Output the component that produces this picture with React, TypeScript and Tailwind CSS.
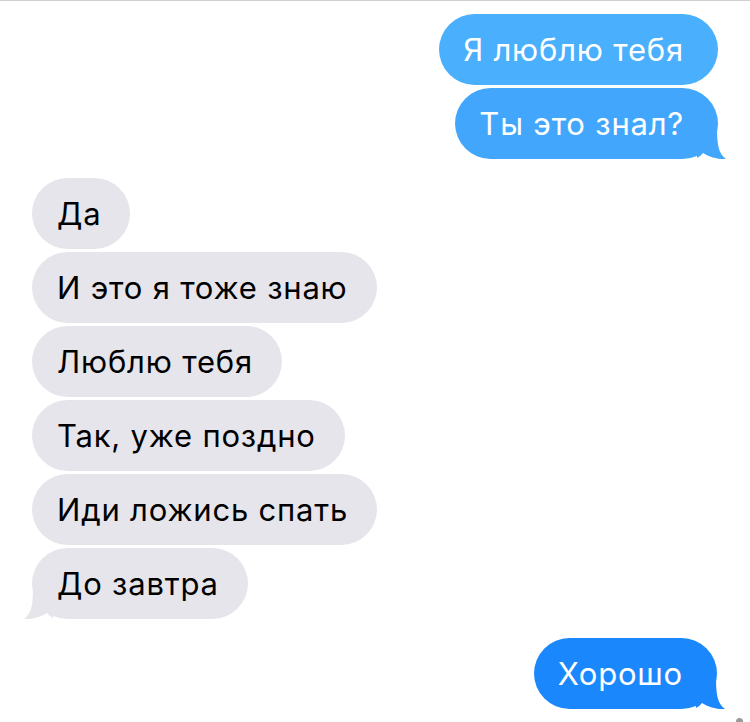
import React from 'react';

type Side = 'me' | 'them';

interface Msg {
  text: string;
  side: Side;
  color?: string;
  tail?: boolean;
}

function Tail({ side, fill }: { side: Side; fill: string }) {
  if (side === 'me') {
    return (
      <svg
        className="absolute bottom-[-1px] right-[-9px]"
        width="30"
        height="32"
        viewBox="0 0 30 32"
      >
        <path
          d="M0 0 L20 0 C20 18 22 26 29 31 C21 31.5 12 29 6 25 Q3 29 0 30 Z"
          fill={fill}
        />
      </svg>
    );
  }
  return (
    <svg
      className="absolute bottom-[-1px] left-[-9px]"
      width="30"
      height="32"
      viewBox="0 0 30 32"
    >
      <path
        d="M30 0 L10 0 C10 18 8 26 1 31 C9 31.5 18 29 24 25 Q27 29 30 30 Z"
        fill={fill}
      />
    </svg>
  );
}

function Bubble({ msg }: { msg: Msg }) {
  const isMe = msg.side === 'me';
  const bg = isMe ? msg.color ?? '#47acfc' : '#e6e5eb';
  return (
    <div className={isMe ? 'flex justify-end' : 'flex justify-start'}>
      <div
        className={
          'relative h-[71px] flex items-center rounded-[36px] text-[31px] leading-[36px] tracking-[0.8px] ' +
          (isMe ? 'pl-[24px] pr-[34px] text-white' : 'pl-[25px] pr-[29px] text-black')
        }
        style={{ backgroundColor: bg }}
      >
        {msg.tail && <Tail side={msg.side} fill={bg} />}
        <span className="relative">{msg.text}</span>
      </div>
    </div>
  );
}

export default function App() {
  const mine: Msg[] = [
    { text: 'Я люблю тебя', side: 'me', color: '#4aaffd' },
    { text: 'Ты это знал?', side: 'me', color: '#42a7fc', tail: true },
  ];
  const theirs: Msg[] = [
    { text: 'Да', side: 'them' },
    { text: 'И это я тоже знаю', side: 'them' },
    { text: 'Люблю тебя', side: 'them' },
    { text: 'Так, уже поздно', side: 'them' },
    { text: 'Иди ложись спать', side: 'them' },
    { text: 'До завтра', side: 'them', tail: true },
  ];

  return (
    <div
      className="relative w-[750px] h-[722px] overflow-hidden bg-white border-t border-[#cfcfcf]"
      style={{ fontFamily: 'Inter, "Liberation Sans", Arial, sans-serif' }}
    >
      <div className="flex flex-col gap-[3px] pt-[13px] pr-[32px]">
        {mine.map((m) => (
          <Bubble key={m.text} msg={m} />
        ))}
      </div>

      <div className="flex flex-col gap-[3px] pt-[19px] pl-[32px]">
        {theirs.map((m) => (
          <Bubble key={m.text} msg={m} />
        ))}
      </div>

      <div className="flex flex-col pt-[19px] pr-[33px]">
        <Bubble msg={{ text: 'Хорошо', side: 'me', color: '#1b87fc', tail: true }} />
      </div>

      <div className="absolute right-[7px] bottom-[-3px] w-[7px] h-[7px] rounded-full bg-[#9a9a9a]" />
    </div>
  );
}
